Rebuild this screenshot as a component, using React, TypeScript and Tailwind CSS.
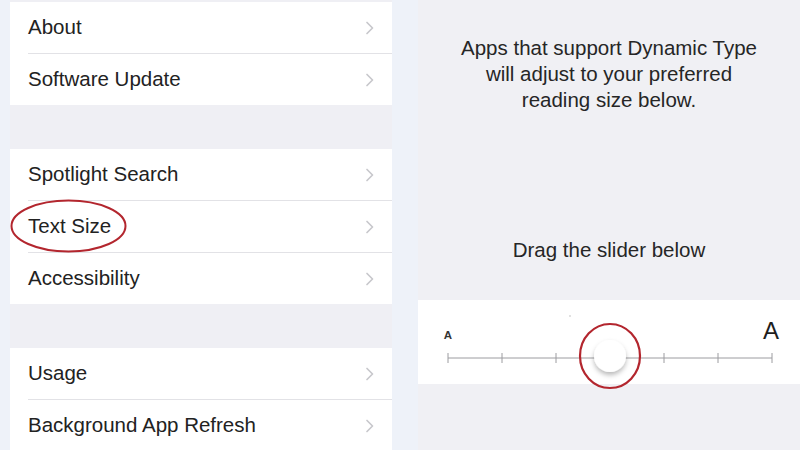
const font = { fontFamily: '"Liberation Sans", Arial, sans-serif' };

function Chevron() {
  return (
    <svg width="10" height="14" viewBox="0 0 10 14" className="shrink-0">
      <path d="M2 1.5 L7.5 7 L2 12.5" fill="none" stroke="#c8c8cc" strokeWidth="1.7" strokeLinecap="round" strokeLinejoin="round" />
    </svg>
  );
}

function Row({ label, last, circled }: { label: string; last?: boolean; circled?: boolean }) {
  return (
    <>
      <div className="relative h-[51px] bg-white flex items-center justify-between pl-[18px] pr-[17px]">
        <span className="text-[20.5px] text-[#222] leading-none">{label}</span>
        <Chevron />
        {circled && (
          <svg className="absolute left-0 top-[-2px] overflow-visible" width="120" height="56" viewBox="0 0 120 56">
            <ellipse cx="58.5" cy="27" rx="57" ry="25.5" fill="none" stroke="#b3262e" strokeWidth="2" />
          </svg>
        )}
      </div>
      {!last && (
        <div className="h-px bg-white pl-[18px]">
          <div className="h-px bg-[#e2e2e6]" />
        </div>
      )}
    </>
  );
}

function Section({ items, circled }: { items: string[]; circled?: string }) {
  return (
    <div className="flex flex-col">
      {items.map((it, i) => (
        <Row key={it} label={it} last={i === items.length - 1} circled={it === circled} />
      ))}
    </div>
  );
}

function Slider() {
  const ticks = [30, 84, 138, 246, 300, 354];
  return (
    <div className="h-[84px] bg-white">
      <svg width="382" height="84" viewBox="0 0 382 84" className="overflow-visible">
        <defs>
          <filter id="sh" x="-50%" y="-50%" width="200%" height="220%">
            <feDropShadow dx="0" dy="3" stdDeviation="2.5" floodColor="#000" floodOpacity="0.28" />
          </filter>
        </defs>
        <text x="30" y="38.5" textAnchor="middle" fontSize="11.5" fontWeight="700" fill="#333" style={font}>A</text>
        <text x="353" y="39" textAnchor="middle" fontSize="24" fill="#1e1e1e" style={font}>A</text>
        <line x1="30" y1="58" x2="354" y2="58" stroke="#9c9ca0" strokeWidth="1" />
        {ticks.map((x) => (
          <line key={x} x1={x} y1="53" x2={x} y2="63" stroke="#9c9ca0" strokeWidth="1" />
        ))}
        <circle cx="192" cy="56" r="16" fill="#fff" filter="url(#sh)" />
        <ellipse cx="192" cy="56" rx="30" ry="32" fill="none" stroke="#b3262e" strokeWidth="2.2" />
        <circle cx="152" cy="16" r="0.8" fill="#bbb" />
      </svg>
    </div>
  );
}

export default function App() {
  return (
    <div className="w-[800px] h-[450px] overflow-hidden flex bg-[#eef2f9]" style={font}>
      <div className="ml-[10px] w-[382px] h-full bg-[#efeff4] pt-[2px] flex flex-col">
        <Section items={['About', 'Software Update']} />
        <div className="h-[44px] shrink-0" />
        <Section items={['Spotlight Search', 'Text Size', 'Accessibility']} circled="Text Size" />
        <div className="h-[44px] shrink-0" />
        <Section items={['Usage', 'Background App Refresh']} />
      </div>
      <div className="ml-[26px] flex-1 h-full bg-[#f0f0f4] flex flex-col">
        <p className="mt-[35px] text-center text-[20.5px] leading-[26px] text-[#262626]">
          Apps that support Dynamic Type
          <br />
          will adjust to your preferred
          <br />
          reading size below.
        </p>
        <p className="mt-[124px] text-center text-[20.5px] leading-[26px] text-[#262626]">
          Drag the slider below
        </p>
        <div className="mt-[37px]">
          <Slider />
        </div>
      </div>
    </div>
  );
}
